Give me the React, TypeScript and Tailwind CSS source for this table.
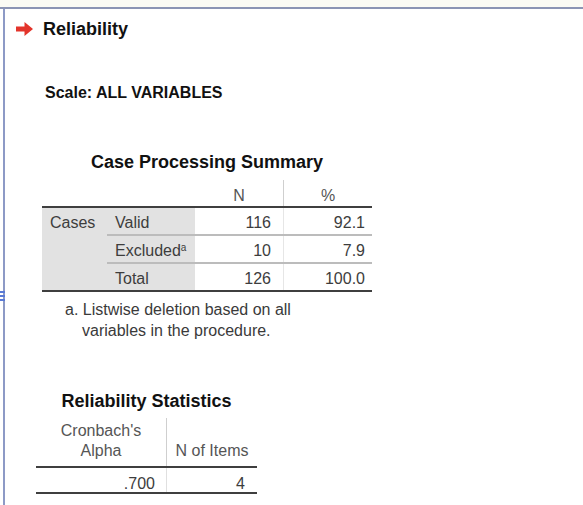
import React from 'react';

const FONT = { fontFamily: '"Liberation Sans", Arial, sans-serif' };

function RedArrow() {
  return (
    <svg width="17" height="14" viewBox="0 0 17 14" className="shrink-0">
      <path d="M0 4.5 H8.5 V0 L17 7 L8.5 14 V9.5 H0 Z" fill="#e3342b" />
    </svg>
  );
}

function CaseSummary() {
  const rows = [
    { label: 'Valid', sup: '', n: '116', pct: '92.1' },
    { label: 'Excluded', sup: 'a', n: '10', pct: '7.9' },
    { label: 'Total', sup: '', n: '126', pct: '100.0' },
  ];
  return (
    <div className="ml-[37px] mt-[49px] w-[330px]">
      <div className="text-center text-[18px] leading-[20px] font-bold text-[#111]">
        Case Processing Summary
      </div>
      <div className="mt-[8px] text-[16px] leading-[20px] text-[#3d3d3d]">
        <div className="flex h-[28px] border-b-2 border-[#3f3f3f]">
          <div className="w-[153px]" />
          <div className="w-[88px] pt-[6px] text-center text-[#555]">N</div>
          <div className="flex-1 border-l border-[#cfcfcf] pt-[6px] text-center text-[#555]">%</div>
        </div>
        <div className="flex border-b-2 border-[#3f3f3f]">
          <div className="w-[65px] bg-[#e2e2e2] pl-[8px] pt-[5px]">Cases</div>
          <div className="flex-1">
            {rows.map((r, i) => (
              <div
                key={r.label}
                className={
                  'flex ' +
                  (i < 2 ? 'h-[28px] border-b-2 border-[#bcbcbc]' : 'h-[26px]')
                }
              >
                <div className="w-[88px] bg-[#e2e2e2] pl-[8px] pt-[5px]">
                  {r.label}
                  {r.sup && <sup className="text-[10px] leading-none">{r.sup}</sup>}
                </div>
                <div className="w-[88px] pr-[12px] pt-[5px] text-right">{r.n}</div>
                <div className="flex-1 border-l border-[#e6e6e6] pr-[7px] pt-[5px] text-right">{r.pct}</div>
              </div>
            ))}
          </div>
        </div>
      </div>
      <div className="mt-[7px] pl-[40px] -indent-[17px] text-[16px] leading-[21px] text-[#3a3a3a] w-[300px]">
        a. Listwise deletion based on all variables in the procedure.
      </div>
    </div>
  );
}

function ReliabilityStats() {
  return (
    <div className="ml-[31px] mt-[50px] w-[221px]">
      <div className="text-center text-[18px] leading-[20px] font-bold text-[#111]">
        Reliability Statistics
      </div>
      <div className="mt-[7px] text-[16px] leading-[20px] text-[#3d3d3d]">
        <div className="flex border-b-2 border-[#3f3f3f]">
          <div className="w-[131px] border-r border-[#cfcfcf] pt-[3px] pb-[5px] text-center text-[#555]">
            Cronbach's
            <br />
            Alpha
          </div>
          <div className="flex flex-1 items-end justify-center pb-[5px] text-[#555]">N of Items</div>
        </div>
        <div className="flex h-[26px] border-b-2 border-[#3f3f3f]">
          <div className="w-[131px] border-r border-[#e0e0e0] pr-[11px] pt-[6px] text-right">.700</div>
          <div className="flex-1 pr-[12px] pt-[6px] text-right">4</div>
        </div>
      </div>
    </div>
  );
}

export default function App() {
  return (
    <div className="relative h-[505px] w-[583px] overflow-hidden bg-white" style={FONT}>
      <div className="h-[7px] bg-[#fbfbf4]" />
      <div className="h-[2px] bg-[#8c95b4]" />
      <div className="ml-[3px] h-[496px] border-l-2 border-[#8d9ac6]">
        <div className="flex items-center pt-[10px]">
          <div className="ml-[11px] mr-[10px] flex items-center">
            <RedArrow />
          </div>
          <div className="text-[18px] leading-[20px] font-bold text-[#111]">Reliability</div>
        </div>
        <div className="ml-[40px] mt-[44px] text-[16px] leading-[20px] font-bold text-[#111]">
          Scale: ALL VARIABLES
        </div>
        <CaseSummary />
        <ReliabilityStats />
      </div>
      <div className="absolute left-0 top-[291px] flex flex-col gap-[2px]">
        <div className="h-[2px] w-[5px] bg-[#5a7ad6]" />
        <div className="h-[2px] w-[5px] bg-[#5a7ad6]" />
        <div className="h-[2px] w-[5px] bg-[#5a7ad6]" />
      </div>
    </div>
  );
}
